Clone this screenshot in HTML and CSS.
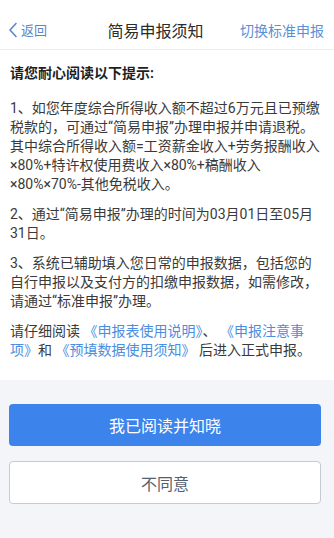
FILE: index.html
```html
<!DOCTYPE html>
<html lang="zh-CN">
<head>
<meta charset="utf-8">
<title>简易申报须知</title>
<link rel="stylesheet" href="styles.css">
</head>
<body>
<div class="page">
  <header class="nav">
    <a class="nav-back">
      <svg class="chev" width="10" height="16" viewBox="0 0 10 16"><polyline points="8,1.5 2,8 8,14.5" fill="none" stroke="#5a87c9" stroke-width="1.6" stroke-linecap="round" stroke-linejoin="round"/></svg>
      <span>返回</span>
    </a>
    <div class="nav-title">简易申报须知</div>
    <a class="nav-right">切换标准申报</a>
  </header>
  <main class="notice">
    <h1 class="notice-title">请您耐心阅读以下提示:</h1>
    <p class="para">1、如您年度综合所得收入额不超过6万元且已预缴税款的，可通过“简易申报”办理申报并申请退税。其中综合所得收入额=工资薪金收入+劳务报酬收入×80%+特许权使用费收入×80%+稿酬收入×80%×70%-其他免税收入。</p>
    <p class="para">2、通过“简易申报”办理的时间为03月01日至05月31日。</p>
    <p class="para">3、系统已辅助填入您日常的申报数据，包括您的自行申报以及支付方的扣缴申报数据，如需修改，请通过“标准申报”办理。</p>
    <p class="para">请仔细阅读 <a class="link">《申报表使用说明》</a>、 <a class="link">《申报注意事项》</a>和 <a class="link">《预填数据使用须知》</a> 后进入正式申报。</p>
  </main>
  <footer class="actions">
    <button class="btn btn-primary">我已阅读并知晓</button>
    <button class="btn btn-plain">不同意</button>
  </footer>
</div>
</body>
</html>
```

FILE: styles.css
```css
* { box-sizing: border-box; }
html, body {
  margin: 0;
  padding: 0;
  background: #f3f5f9;
  font-family: "Roboto", "Noto Sans CJK SC", sans-serif;
}
.page {
  width: 334px;
  height: 538px;
  display: flex;
  flex-direction: column;
}
.nav {
  height: 50px;
  padding: 10px 10px 0 8px;
  display: flex;
  align-items: center;
  background: #fff;
  border-bottom: 1px solid #ececec;
}
.nav-back {
  display: flex;
  align-items: center;
  gap: 3px;
  font-size: 13px;
  color: #5a87c9;
}
.chev { display: block; }
.nav-title {
  flex: 1;
  text-align: center;
  font-size: 16px;
  color: #2b2b2b;
  padding-left: 24px;
}
.nav-right {
  font-size: 14px;
  color: #5b8fd6;
}
.notice {
  background: #fff;
  padding: 14px 10px 20px 10px;
  color: #333;
}
.notice-title {
  margin: 0 0 16px;
  font-size: 14px;
  line-height: 19px;
  font-weight: bold;
  color: #1f1f1f;
}
.para {
  margin: 0 0 11px;
  font-size: 14px;
  line-height: 19px;
  color: #3a3a3a;
}
.para:last-child { margin-bottom: 0; }
.link { color: #4a8ee0; }
.actions {
  flex: 1;
  padding: 24px 13px 0 9px;
  display: flex;
  flex-direction: column;
  gap: 15px;
}
.btn {
  height: 42px;
  width: 100%;
  border-radius: 4px;
  font-family: inherit;
  font-size: 16px;
}
.btn-primary {
  background: #3c84eb;
  border: none;
  color: #fff;
}
.btn-plain {
  height: 43px;
  background: #fff;
  border: 1px solid #c6cad2;
  color: #566070;
}
```
